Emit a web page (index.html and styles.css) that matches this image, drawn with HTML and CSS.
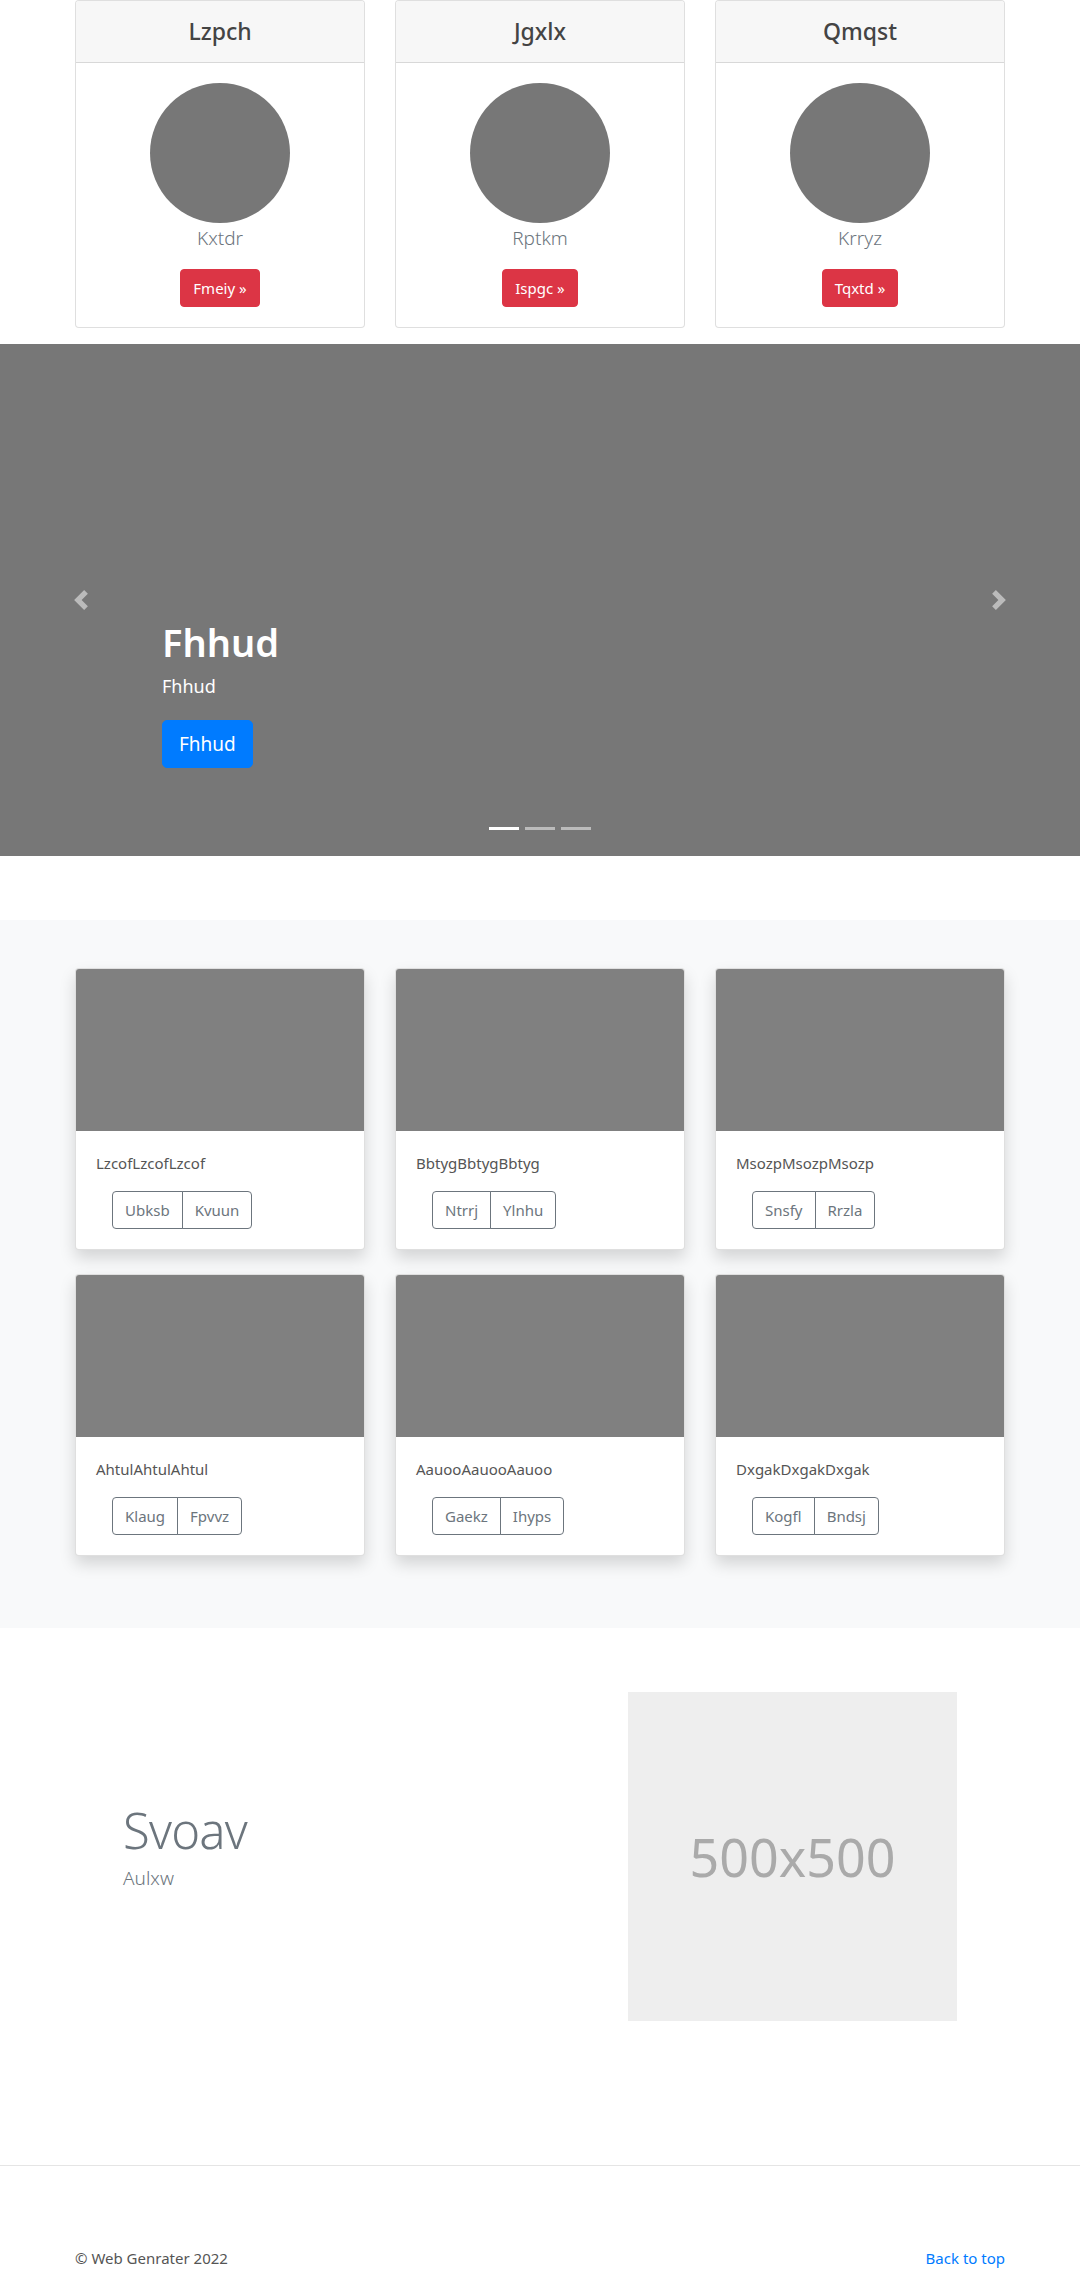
FILE: index.html
```html
<!DOCTYPE html>
<html lang="en">
<head>
    <meta charset="UTF-8">
    <title>Web Genrater</title>
    <meta name="viewport" content="width=device-width, initial-scale=1">
    <link rel="stylesheet" href="styles.css">
</head>
<body>
    <div class="container">
        <div class="card-deck">
            <div class="card tier">
                <div class="card-header"><h4>Lzpch</h4></div>
                <div class="card-body">
                    <div class="avatar"></div>
                    <p class="tier-name">Kxtdr</p>
                    <a class="btn btn-danger" href="#">Fmeiy &raquo;</a>
                </div>
            </div>
            <div class="card tier">
                <div class="card-header"><h4>Jgxlx</h4></div>
                <div class="card-body">
                    <div class="avatar"></div>
                    <p class="tier-name">Rptkm</p>
                    <a class="btn btn-danger" href="#">Ispgc &raquo;</a>
                </div>
            </div>
            <div class="card tier">
                <div class="card-header"><h4>Qmqst</h4></div>
                <div class="card-body">
                    <div class="avatar"></div>
                    <p class="tier-name">Krryz</p>
                    <a class="btn btn-danger" href="#">Tqxtd &raquo;</a>
                </div>
            </div>
        </div>
    </div>

    <div class="carousel">
        <a class="carousel-control prev" href="#">
            <svg width="20" height="20" viewBox="0 0 8 8"><path fill="#fff" d="M5.25 0l-4 4 4 4 1.5-1.5L4.25 4l2.5-2.5L5.25 0z"/></svg>
        </a>
        <div class="carousel-caption">
            <h1>Fhhud</h1>
            <p>Fhhud</p>
            <a class="btn btn-lg btn-primary" href="#">Fhhud</a>
        </div>
        <a class="carousel-control next" href="#">
            <svg width="20" height="20" viewBox="0 0 8 8"><path fill="#fff" d="M2.75 0l-1.5 1.5L3.75 4l-2.5 2.5L2.75 8l4-4-4-4z"/></svg>
        </a>
        <ol class="carousel-indicators">
            <li class="active"></li>
            <li></li>
            <li></li>
        </ol>
    </div>

    <section class="album">
        <div class="container">
            <div class="album-grid">
                <div class="card album-card">
                    <div class="thumb"></div>
                    <div class="card-body">
                        <p class="card-text">LzcofLzcofLzcof</p>
                        <div class="btn-group">
                            <a class="btn btn-outline" href="#">Ubksb</a><a class="btn btn-outline" href="#">Kvuun</a>
                        </div>
                    </div>
                </div>
                <div class="card album-card">
                    <div class="thumb"></div>
                    <div class="card-body">
                        <p class="card-text">BbtygBbtygBbtyg</p>
                        <div class="btn-group">
                            <a class="btn btn-outline" href="#">Ntrrj</a><a class="btn btn-outline" href="#">Ylnhu</a>
                        </div>
                    </div>
                </div>
                <div class="card album-card">
                    <div class="thumb"></div>
                    <div class="card-body">
                        <p class="card-text">MsozpMsozpMsozp</p>
                        <div class="btn-group">
                            <a class="btn btn-outline" href="#">Snsfy</a><a class="btn btn-outline" href="#">Rrzla</a>
                        </div>
                    </div>
                </div>
                <div class="card album-card">
                    <div class="thumb"></div>
                    <div class="card-body">
                        <p class="card-text">AhtulAhtulAhtul</p>
                        <div class="btn-group">
                            <a class="btn btn-outline" href="#">Klaug</a><a class="btn btn-outline" href="#">Fpvvz</a>
                        </div>
                    </div>
                </div>
                <div class="card album-card">
                    <div class="thumb"></div>
                    <div class="card-body">
                        <p class="card-text">AauooAauooAauoo</p>
                        <div class="btn-group">
                            <a class="btn btn-outline" href="#">Gaekz</a><a class="btn btn-outline" href="#">Ihyps</a>
                        </div>
                    </div>
                </div>
                <div class="card album-card">
                    <div class="thumb"></div>
                    <div class="card-body">
                        <p class="card-text">DxgakDxgakDxgak</p>
                        <div class="btn-group">
                            <a class="btn btn-outline" href="#">Kogfl</a><a class="btn btn-outline" href="#">Bndsj</a>
                        </div>
                    </div>
                </div>
            </div>
        </div>
    </section>

    <div class="container featurette">
        <div class="featurette-text">
            <h2>Svoav</h2>
            <p class="lead">Aulxw</p>
        </div>
        <div class="placeholder">500x500</div>
    </div>

    <hr class="divider">

    <footer class="container footer">
        <p>&copy; Web Genrater 2022</p>
        <a href="#">Back to top</a>
    </footer>
</body>
</html>
```

FILE: styles.css
```css
body {
    margin: 0;
    font-family: 'Noto Sans', 'Open Sans', sans-serif;
    font-size: 15px;
    line-height: 24px;
    color: #555;
    background: #fff;
}

a {
    text-decoration: none;
}

.container {
    width: 930px;
    margin: 0 auto;
}

/* top cards */
.card-deck {
    display: flex;
    gap: 30px;
    margin-bottom: 16px;
}

.card {
    background: #fff;
    border: 1px solid rgba(0,0,0,0.125);
    border-radius: 4px;
}

.tier {
    flex: 1;
    text-align: center;
}

.tier .card-header {
    background: #f7f7f7;
    border-bottom: 1px solid rgba(0,0,0,0.125);
    border-radius: 3px 3px 0 0;
    padding: 16px 20px;
}

.tier h4 {
    margin: 0;
    font-size: 23px;
    line-height: 29px;
    font-weight: 500;
    color: #444;
}

.tier .card-body {
    padding: 20px;
    display: flex;
    flex-direction: column;
    align-items: center;
}

.avatar {
    width: 140px;
    height: 140px;
    border-radius: 50%;
    background: #777;
}

.tier-name {
    margin: 0 0 16px;
    font-size: 19px;
    line-height: 30px;
    font-weight: 300;
    color: #6c757d;
}

.btn {
    display: inline-block;
    padding: 6px 12px;
    font-size: 15px;
    line-height: 24px;
    border: 1px solid transparent;
    border-radius: 4px;
}

.btn-danger {
    background: #dc3545;
    border-color: #dc3545;
    color: #fff;
}

/* carousel */
.carousel {
    position: relative;
    height: 512px;
    background: #777;
    margin-bottom: 64px;
}

.carousel-control {
    position: absolute;
    top: 0;
    bottom: 0;
    width: 15%;
    display: flex;
    align-items: center;
    justify-content: center;
    opacity: 0.5;
}

.carousel-control.prev { left: 0; }
.carousel-control.next { right: 0; }

.carousel-caption {
    position: absolute;
    left: 15%;
    right: 15%;
    bottom: 88px;
    color: #fff;
}

.carousel-caption h1 {
    margin: 0 0 8px;
    font-size: 38px;
    line-height: 46px;
    font-weight: 600;
}

.carousel-caption p {
    margin: 0 0 20px;
    font-size: 18px;
    line-height: 27px;
}

.btn-lg {
    padding: 8px 16px;
    font-size: 19px;
    line-height: 30px;
    border-radius: 5px;
}

.btn-primary {
    background: #007bff;
    border-color: #007bff;
    color: #fff;
}

.carousel-indicators {
    position: absolute;
    left: 0;
    right: 0;
    bottom: 26px;
    margin: 0;
    padding: 0;
    list-style: none;
    display: flex;
    justify-content: center;
    gap: 6px;
}

.carousel-indicators li {
    width: 30px;
    height: 3px;
    background: #fff;
    opacity: 0.5;
}

.carousel-indicators li.active {
    opacity: 1;
}

/* album */
.album {
    background: #f8f9fa;
    padding: 48px 0;
}

.album-grid {
    display: grid;
    grid-template-columns: repeat(3, 1fr);
    column-gap: 30px;
}

.album-card {
    margin-bottom: 24px;
    box-shadow: 0 8px 16px rgba(0,0,0,0.15);
    overflow: hidden;
}

.thumb {
    height: 162px;
    background: #808080;
}

.album-card .card-body {
    padding: 20px;
}

.card-text {
    margin: 0 0 16px;
}

.btn-group {
    display: inline-flex;
    margin-left: 16px;
}

.btn-outline {
    border-color: #6c757d;
    color: #6c757d;
}

.btn-group .btn:first-child {
    border-radius: 4px 0 0 4px;
}

.btn-group .btn + .btn {
    margin-left: -1px;
    border-radius: 0 4px 4px 0;
}

/* featurette */
.featurette {
    display: flex;
    align-items: center;
    padding: 64px 0;
}

.featurette-text {
    flex: 1;
    padding-left: 48px;
}

.featurette h2 {
    margin: 0 0 8px;
    font-size: 49px;
    line-height: 50px;
    font-weight: 300;
    letter-spacing: -0.8px;
    color: #6c757d;
}

.lead {
    margin: 0 0 16px;
    font-size: 19px;
    line-height: 30px;
    font-weight: 300;
    color: #6c757d;
}

.placeholder {
    width: 329px;
    height: 329px;
    margin-right: 48px;
    background: #eee;
    color: #aaa;
    font-size: 52px;
    display: flex;
    align-items: center;
    justify-content: center;
}

.divider {
    margin: 80px 0;
    border: 0;
    border-top: 1px solid rgba(0,0,0,0.1);
}

.footer {
    display: flex;
    justify-content: space-between;
}

.footer p {
    margin: 0;
}

.footer a {
    color: #007bff;
}
```
